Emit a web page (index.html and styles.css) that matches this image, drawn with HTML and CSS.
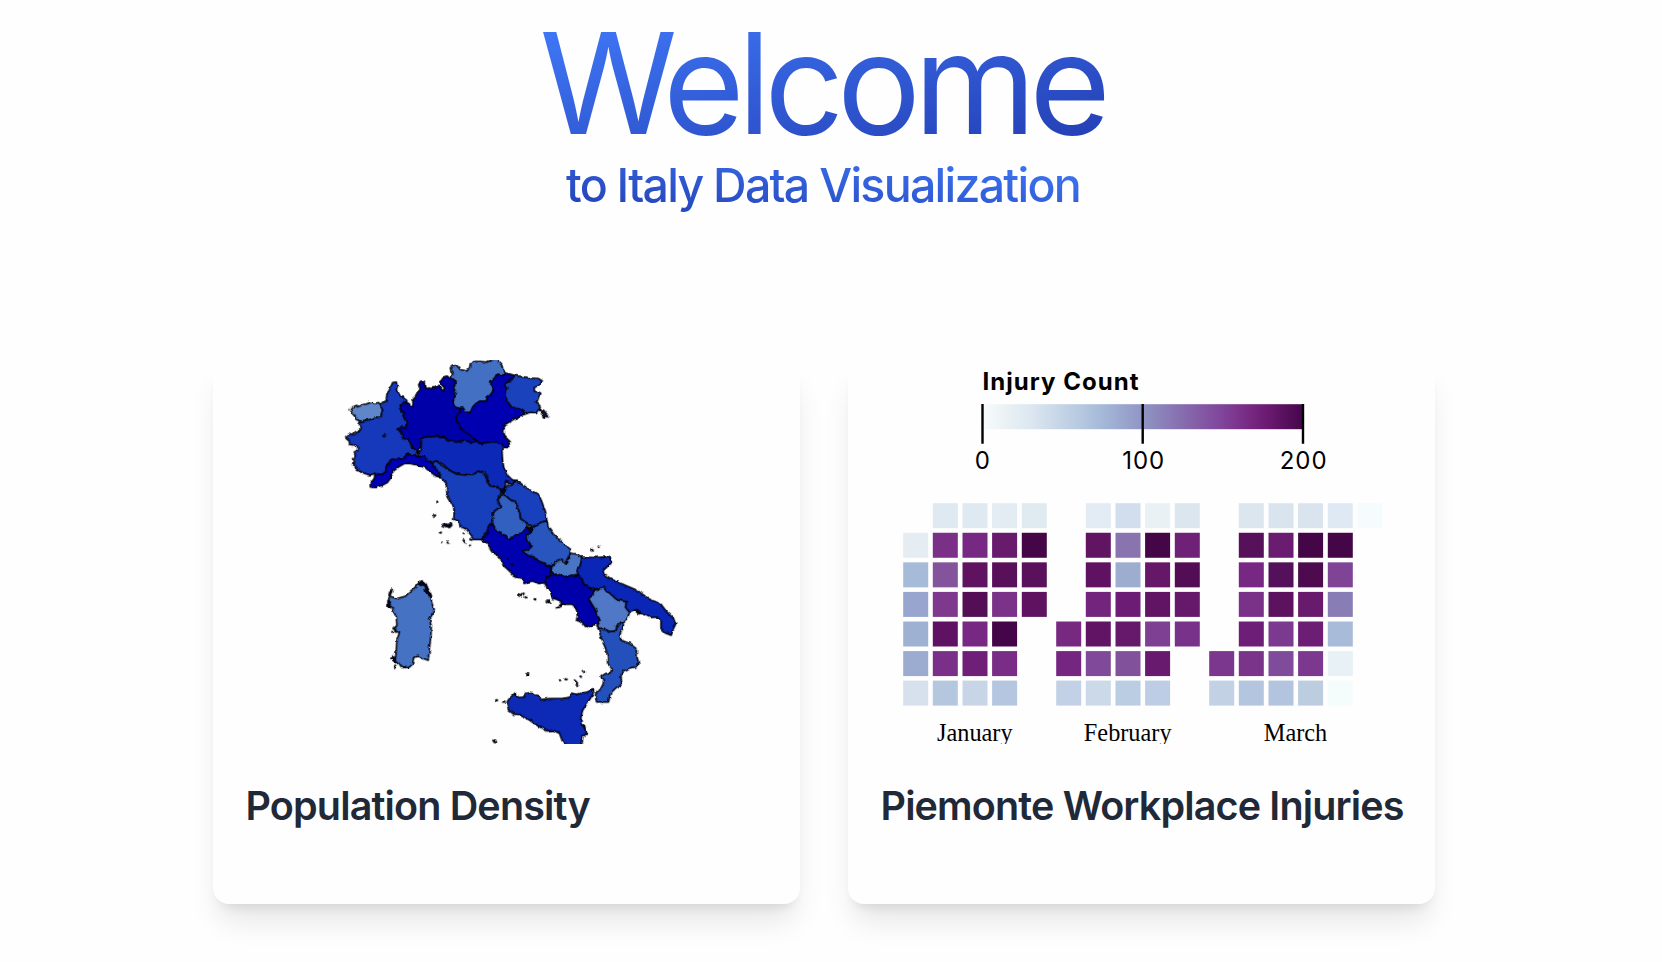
FILE: index.html
```html
<!DOCTYPE html>
<html lang="en">
<head>
<meta charset="utf-8">
<title>Italy Data Visualization</title>
<link rel="stylesheet" href="styles.css">
</head>
<body>
<header class="hero">
  <h1 class="hero-title">Welcome</h1>
  <p class="hero-subtitle">to Italy Data Visualization</p>
</header>
<main class="cards">
  <article class="card">
    <svg class="card-figure" viewBox="213 360 587 384" role="img" aria-label="Map of Italy">
      <defs>
        <filter id="coast" x="-5%" y="-5%" width="110%" height="110%" color-interpolation-filters="sRGB">
          <feTurbulence type="fractalNoise" baseFrequency="0.2" numOctaves="2" seed="4" result="n"/>
          <feDisplacementMap in="SourceGraphic" in2="n" scale="3.5" xChannelSelector="R" yChannelSelector="G"/>
          <feGaussianBlur stdDeviation="0.4"/>
        </filter>
      </defs>
      <g filter="url(#coast)" transform="translate(.3 .3)">
      <g class="regions" transform="translate(330 350) scale(.33333)">
        <path fill="#5e86c8" d="M60,178 67,170 80,165 82,170 98,163 108,161 124,155 132,160 145,157 151,163 156,180 152,200 135,201 120,208 92,213 78,208 73,197 66,190Z"/>
        <path fill="#1638bb" d="M151,163 158,155 168,152 170,130 178,118 187,97 198,95 201,108 198,120 206,130 212,142 222,140 232,155 222,157 212,162 208,172 216,185 222,182 219,198 230,218 225,233 208,230 204,237 213,248 218,264 232,268 240,280 250,293 258,300 262,308 255,315 230,312 222,322 200,326 182,327 178,340 170,345 166,362 158,372 145,372 134,370 118,374 100,368 82,360 70,345 73,335 66,327 75,318 72,305 82,300 82,292 76,285 58,283 57,270 46,260 55,252 68,256 78,245 90,240 87,220 92,213 120,208 135,201 152,200 156,180Z"/>
        <path fill="#0000a8" d="M232,155 238,158 238,168 247,170 249,155 245,148 255,138 262,125 270,118 265,100 272,92 282,96 283,108 300,115 315,112 325,105 333,115 338,123 343,113 335,105 331,92 338,80 350,77 360,85 372,88 375,100 370,110 375,125 370,145 370,165 378,172 392,174 388,185 380,192 378,212 388,222 390,235 405,245 425,258 440,272 425,277 400,270 380,275 355,272 343,262 330,262 318,257 300,260 283,258 275,265 272,285 265,295 262,308 258,300 250,293 240,280 232,268 218,264 213,248 204,237 208,230 225,233 230,218 219,198 222,182 216,185 208,172 212,162 222,157Z"/>
        <path fill="#4470c4" d="M360,52 368,47 380,46 390,58 410,62 418,52 420,40 432,34 450,34 470,35 483,30 483,20 500,20 505,35 515,45 518,58 528,68 520,75 500,72 492,85 482,92 482,105 490,120 480,135 472,140 468,152 450,152 440,158 428,170 420,187 405,187 400,175 392,174 378,172 370,165 370,145 375,125 370,110 375,100 372,88 362,82 368,70 362,62Z"/>
        <path fill="#0000b0" d="M528,68 552,75 545,85 528,98 522,105 533,113 527,125 528,150 538,162 545,172 565,172 578,178 582,192 570,197 550,207 525,222 520,235 523,258 540,275 532,292 517,292 515,282 500,275 480,275 450,280 440,272 425,258 405,245 390,235 388,222 378,212 380,192 388,185 392,174 400,175 405,187 420,187 428,170 440,158 450,152 468,152 472,140 480,135 490,120 482,105 482,92 492,85 500,72 520,75Z"/>
        <path fill="#1a42bc" d="M552,75 570,78 600,83 625,85 636,92 630,102 612,112 612,122 632,130 625,140 622,150 618,155 630,168 628,175 618,187 600,187 582,192 578,178 565,172 545,172 538,162 528,150 527,125 533,113 522,105 528,98 545,85Z"/>
        <path fill="#0c1c50" d="M628,178 640,180 652,195 645,202 636,192Z"/>
        <path fill="#0000b4" d="M134,370 145,372 158,372 166,362 170,345 178,340 182,327 200,326 222,322 230,312 255,315 268,320 285,318 290,330 305,335 310,350 320,360 332,380 318,378 300,365 285,352 262,345 240,340 222,340 205,350 190,362 182,372 180,385 170,398 155,405 135,412 120,410 120,400 132,385Z"/>
        <path fill="#0c28b6" d="M262,308 272,300 272,285 275,265 283,258 300,260 318,257 330,262 343,262 355,272 380,275 400,270 425,277 440,272 450,280 480,275 500,275 515,282 517,292 515,300 517,330 520,350 532,375 545,388 557,392 550,405 540,400 532,400 527,390 525,405 520,418 505,413 480,405 470,392 472,378 458,363 448,370 430,378 402,372 382,372 360,362 338,342 320,333 308,345 305,335 290,330 285,318 268,320Z"/>
      </g>
      <g class="regions" transform="translate(420 440) scale(.33333)">
        <path fill="#173ebb" d="M35,68 48,62 65,75 90,92 110,102 135,104 160,102 175,92 190,100 200,108 200,125 210,137 230,142 245,148 243,160 232,178 238,190 240,200 220,215 217,240 220,250 208,252 202,265 205,278 192,285 185,298 160,298 155,288 140,268 120,258 115,242 100,238 102,215 100,200 88,180 80,160 78,130 65,115 62,105 50,92Z"/>
        <path fill="#1840bc" d="M285,120 305,132 330,150 355,163 365,185 375,212 380,242 365,245 345,255 335,262 325,252 300,235 298,215 292,205 288,182 275,182 262,172 245,160 258,152 250,142 262,135 275,135Z"/>
        <path fill="#3260c0" d="M245,165 262,172 275,182 288,182 292,205 298,215 300,235 325,252 322,262 300,278 285,285 268,298 258,292 245,278 230,272 220,260 217,240 220,215 240,200 238,190 232,178 243,168Z"/>
        <path fill="#0000ae" d="M185,298 192,285 205,278 202,265 208,252 218,255 220,260 230,272 245,278 258,292 268,298 285,285 300,278 322,262 335,265 330,278 320,285 322,300 335,318 325,328 308,332 322,345 340,350 350,360 370,368 390,378 390,405 378,412 375,428 355,430 340,422 325,425 312,430 305,415 280,405 265,390 245,372 242,358 232,345 215,335 205,318 200,308Z"/>
        <path fill="#2856be" d="M380,242 385,262 400,282 420,300 435,315 452,328 448,345 435,370 425,358 412,360 405,370 390,378 370,368 350,360 340,350 322,345 308,332 325,328 335,318 322,300 320,285 330,278 335,262 345,255 365,245Z"/>
        <path fill="#4a74c4" d="M452,338 470,342 485,350 483,365 478,380 470,390 475,402 455,405 435,410 415,403 395,403 390,390 392,378 405,370 412,360 425,358 435,370 448,350Z"/>
        <path fill="#0000aa" d="M395,403 415,403 435,410 455,405 475,405 485,415 490,430 500,440 520,450 518,465 505,475 515,492 525,508 530,525 540,538 532,552 520,553 508,562 495,558 485,545 468,540 472,525 465,500 455,492 430,492 408,503 425,490 412,478 398,475 390,455 375,432 380,412Z"/>
        <path fill="#0a26b6" d="M485,350 520,352 550,350 570,352 573,368 560,380 548,392 552,403 580,420 620,437 650,450 685,475 722,492 740,515 760,535 766,552 757,570 753,585 735,578 722,565 722,540 710,530 690,532 665,520 650,508 635,515 622,517 615,500 618,485 595,480 585,475 570,460 560,455 550,442 535,447 505,442 490,430 485,415 475,405 470,390 478,380 483,365Z"/>
        <path fill="#5078c6" d="M520,450 535,447 550,442 560,455 570,460 585,475 595,480 618,485 615,500 628,517 618,540 605,552 590,552 588,570 570,575 550,565 538,568 530,560 540,538 530,525 525,508 515,492 505,475 518,465Z"/>
        <path class="rock" d="M64,256 72,250 84,252 94,247 96,256 88,263 76,260Z M238,146 252,142 256,152 250,160 244,156Z M322,262 332,260 336,270 326,276Z M376,482 388,478 394,486 382,488Z M408,503 428,490 436,492 418,502Z M640,508 655,510 664,520 654,522Z"/>
        <path class="isle" d="M48,182h.1 M42,226h3 M62,277h3 M63,304h.1 M82,307h3 M130,280h.1 M130,300l5,6 M150,298h5 M149,316h.1 M262,354h.1 M277,373h.1 M262,124h3 M294,462l10,3 6,-5 M316,471h.1 M343,477h2 M513,330h4 M535,319h.1"/>
      </g>
      <g class="regions" transform="translate(370 560) scale(.33333)">
        <path fill="#2450bc" d="M684,203 700,205 720,214 738,212 742,192 755,188 760,195 755,210 748,225 752,240 775,248 802,268 800,290 806,310 800,320 780,322 755,335 752,350 755,372 735,385 720,400 715,425 680,425 675,408 678,395 690,388 698,372 702,358 692,350 705,340 720,338 725,325 712,310 712,290 708,268 695,240Z"/>
        <path fill="#0c2ab6" d="M412,422 420,412 435,398 445,412 460,410 465,400 485,396 490,405 502,405 512,418 540,415 575,415 600,410 605,398 620,402 650,395 670,388 668,402 650,430 637,450 632,470 632,490 642,500 650,520 638,528 634,560 590,560 575,540 568,520 550,510 530,512 505,498 475,478 450,463 430,462 415,450 410,435Z"/>
        <path fill="#4672c4" d="M55,118 60,108 80,115 105,108 115,98 130,85 145,70 155,65 170,80 180,100 185,130 192,148 185,165 178,175 183,200 182,225 178,260 174,300 160,295 145,288 130,292 127,312 115,322 95,322 85,308 75,300 78,270 80,240 88,215 75,215 72,205 80,195 78,170 70,155 65,140 55,138Z"/>
        <path class="rock" d="M55,108 58,92 67,82 66,92 60,106Z M52,120 60,122 60,140 52,140Z M140,72 154,60 168,70 174,86 184,104 184,112 172,104 160,80 150,74Z M60,294 72,288 76,306 70,304Z M66,204 76,200 78,212Z M612,357 621,365 622,378 616,370Z M366,540 376,538 380,548 372,548Z M432,402 436,400 440,410Z M636,490 644,496 646,512Z"/>
        <path class="isle" d="M66,215h.1 M75,316v8 M471,342h3 M378,420h2 M398,424h5 M569,360h.1 M586,357h3 M630,349h2 M641,335h2"/>
      </g>
      <circle cx="384" cy="435.500" r="1.700" fill="#020a30"/>
      <path class="isle-far" d="M436,500.500h.1 M433.500,515.500h1"/>
      </g>
    </svg>
    <div class="card-body"><h2 class="card-title">Population Density</h2></div>
  </article>
  <article class="card">
    <svg class="card-figure" viewBox="848 360 587 384" role="img" aria-label="Calendar heat map of injuries">
      <defs>
        <linearGradient id="ramp">
          <stop offset="0" stop-color="#f7fcfd"/><stop offset=".07" stop-color="#ebf2f5"/>
          <stop offset=".15" stop-color="#dce7f0"/><stop offset=".31" stop-color="#b5c8e0"/>
          <stop offset=".375" stop-color="#a5b8d7"/>
          <stop offset=".5" stop-color="#8f95c3"/><stop offset=".625" stop-color="#876cae"/>
          <stop offset=".75" stop-color="#80449a"/><stop offset=".82" stop-color="#792c86"/>
          <stop offset=".885" stop-color="#6c1b73"/><stop offset="1" stop-color="#45064a"/>
        </linearGradient>
      </defs>
      <text class="legend-title" x="982.500" y="389.500" textLength="156">Injury Count</text>
      <rect x="982.500" y="404.200" width="320.500" height="25" fill="url(#ramp)"/>
      <path class="tick" d="M982.500,404V443.700M1142.700,404V443.700M1303,404V443.700"/>
      <text class="tick-label" x="982.900" y="468.600">0</text>
      <text class="tick-label" x="1143.700" y="468.600">100</text>
      <text class="tick-label" x="1303.700" y="468.600">200</text>
      <g class="month" transform="translate(903.200 503.200)">
        <g><rect x="29.6" fill="#dfe9f2"/><rect x="59.3" fill="#dee9f1"/><rect x="88.9" fill="#e3ebf3"/><rect x="118.6" fill="#dfebf0"/></g>
        <g transform="translate(0 29.57)"><rect fill="#e5ecf2"/><rect x="29.6" fill="#7b3087"/><rect x="59.3" fill="#772882"/><rect x="88.9" fill="#681a6d"/><rect x="118.6" fill="#450648"/></g>
        <g transform="translate(0 59.14)"><rect fill="#a6bbd7"/><rect x="29.6" fill="#83539c"/><rect x="59.3" fill="#5f125f"/><rect x="88.9" fill="#58105a"/><rect x="118.6" fill="#5a105b"/></g>
        <g transform="translate(0 88.7)"><rect fill="#98a5ce"/><rect x="29.6" fill="#7e398f"/><rect x="59.3" fill="#540e56"/><rect x="88.9" fill="#7a3388"/><rect x="118.6" fill="#5f1260"/></g>
        <g transform="translate(0 118.3)"><rect fill="#9fb1d3"/><rect x="29.6" fill="#601262"/><rect x="59.3" fill="#762882"/><rect x="88.9" fill="#440648"/></g>
        <g transform="translate(0 147.9)"><rect fill="#9cacd0"/><rect x="29.6" fill="#7a3088"/><rect x="59.3" fill="#6f1f77"/><rect x="88.9" fill="#792d86"/></g>
        <g transform="translate(0 177.4)"><rect fill="#d7e0ed"/><rect x="29.6" fill="#b5c7df"/><rect x="59.3" fill="#c8d5e6"/><rect x="88.9" fill="#b4c6e0"/></g>
      </g>
      <g class="month" transform="translate(1056.200 503.200)">
        <g><rect x="29.6" fill="#e3ebf4"/><rect x="59.3" fill="#d2deed"/><rect x="88.9" fill="#e9f1f5"/><rect x="118.6" fill="#dbe6ef"/></g>
        <g transform="translate(0 29.57)"><rect x="29.6" fill="#601461"/><rect x="59.3" fill="#8a74b0"/><rect x="88.9" fill="#450648"/><rect x="118.6" fill="#6f2177"/></g>
        <g transform="translate(0 59.14)"><rect x="29.6" fill="#601262"/><rect x="59.3" fill="#9cadd0"/><rect x="88.9" fill="#651867"/><rect x="118.6" fill="#530d55"/></g>
        <g transform="translate(0 88.7)"><rect x="29.6" fill="#73257e"/><rect x="59.3" fill="#6c1c74"/><rect x="88.9" fill="#611463"/><rect x="118.6" fill="#66186a"/></g>
        <g transform="translate(0 118.3)"><rect fill="#772880"/><rect x="29.6" fill="#621464"/><rect x="59.3" fill="#66186a"/><rect x="88.9" fill="#7e4093"/><rect x="118.6" fill="#79328a"/></g>
        <g transform="translate(0 147.9)"><rect fill="#752680"/><rect x="29.6" fill="#804999"/><rect x="59.3" fill="#82519c"/><rect x="88.9" fill="#681a6e"/></g>
        <g transform="translate(0 177.4)"><rect fill="#c2d1e5"/><rect x="29.6" fill="#ccd9e9"/><rect x="59.3" fill="#bacde3"/><rect x="88.9" fill="#bdcde5"/></g>
      </g>
      <g class="month" transform="translate(1209.200 503.200)">
        <g><rect x="29.6" fill="#dbe6ef"/><rect x="59.3" fill="#dae4ef"/><rect x="88.9" fill="#dae4ef"/><rect x="118.6" fill="#dfe9f3"/><rect x="148.3" fill="#f6fbfe"/></g>
        <g transform="translate(0 29.57)"><rect x="29.6" fill="#57115a"/><rect x="59.3" fill="#6a1c70"/><rect x="88.9" fill="#450648"/><rect x="118.6" fill="#450648"/></g>
        <g transform="translate(0 59.14)"><rect x="29.6" fill="#762882"/><rect x="59.3" fill="#54105a"/><rect x="88.9" fill="#4d0a4f"/><rect x="118.6" fill="#7f4495"/></g>
        <g transform="translate(0 88.7)"><rect x="29.6" fill="#793288"/><rect x="59.3" fill="#5c125e"/><rect x="88.9" fill="#681a6c"/><rect x="118.6" fill="#887db4"/></g>
        <g transform="translate(0 118.3)"><rect x="29.6" fill="#6d1e76"/><rect x="59.3" fill="#7b3a8f"/><rect x="88.9" fill="#6c1d74"/><rect x="118.6" fill="#a8bbd8"/></g>
        <g transform="translate(0 147.9)"><rect fill="#7b378d"/><rect x="29.6" fill="#7a348a"/><rect x="59.3" fill="#7f4b9a"/><rect x="88.9" fill="#7b388e"/><rect x="118.6" fill="#e8f1f5"/></g>
        <g transform="translate(0 177.4)"><rect fill="#c3d1e5"/><rect x="29.6" fill="#b4c5df"/><rect x="59.3" fill="#b3c4df"/><rect x="88.9" fill="#bccddf"/><rect x="118.6" fill="#f5fcfc"/></g>
      </g>
      <text class="month-label" x="974.800" y="741">January</text>
      <text class="month-label" x="1127.700" y="741">February</text>
      <text class="month-label" x="1295.500" y="741">March</text>
    </svg>
    <div class="card-body"><h2 class="card-title">Piemonte Workplace Injuries</h2></div>
  </article>
</main>
</body>
</html>
```

FILE: styles.css
```css
* { box-sizing: border-box; }
body {
  margin: 0;
  height: 962px;
  overflow: hidden;
  background: #fefefe;
  font-family: Inter, "Liberation Sans", sans-serif;
}
h1, h2, p { margin: 0; }
.hero {
  display: flex;
  flex-direction: column;
  align-items: center;
  height: 360px;
  padding-right: 16px;
}
.hero-title, .hero-subtitle {
  background-clip: text;
  -webkit-background-clip: text;
  color: transparent;
  white-space: nowrap;
}
.hero-title {
  margin: 11px 0 0 3px;
  padding-right: 6px;
  font-size: 140px;
  line-height: 144px;
  font-weight: 430;
  letter-spacing: -7.2px;
  background-image: linear-gradient(to bottom right, #417bfb, #223bb0);
}
.hero-subtitle {
  margin-top: 2px;
  font-size: 46.5px;
  line-height: 56px;
  font-weight: 450;
  letter-spacing: -1.75px;
  background-image: linear-gradient(to top right, #223fb4, #417bfb);
}
.cards {
  display: grid;
  grid-template-columns: 587px 587px;
  gap: 48px;
  padding-left: 213px;
}
.card {
  height: 544px;
  background: #fefefe;
  border-radius: 16px;
  overflow: hidden;
  box-shadow: 0 22px 30px -6px rgba(0, 0, 0, .1), 0 9px 12px -7px rgba(0, 0, 0, .1);
}
.card-figure { display: block; width: 587px; height: 384px; overflow: hidden; }
.card-body { padding: 33.500px 0 0 32.500px; }
.card-title {
  font-size: 39.5px;
  line-height: 56px;
  font-weight: 600;
  color: #1f2937;
  letter-spacing: -0.85px;
  white-space: nowrap;
}
.regions path { stroke: #00020c; stroke-width: 4.6; stroke-linejoin: round; }
.regions .rock { fill: #02061a; stroke-width: 3; }
.regions .isle { fill: none; stroke-width: 7; stroke-linecap: round; }
.isle-far { fill: none; stroke: #05070f; stroke-width: 2; stroke-linecap: round; }
.legend-title { font-size: 24px; font-weight: 700; }
.tick { stroke: #000; stroke-width: 2.4; }
.tick-label { font-size: 24px; letter-spacing: 1px; text-anchor: middle; }
.month rect { width: 25px; height: 25px; }
.month-label { font-family: "Liberation Serif", serif; font-size: 24.3px; text-anchor: middle; }
```
